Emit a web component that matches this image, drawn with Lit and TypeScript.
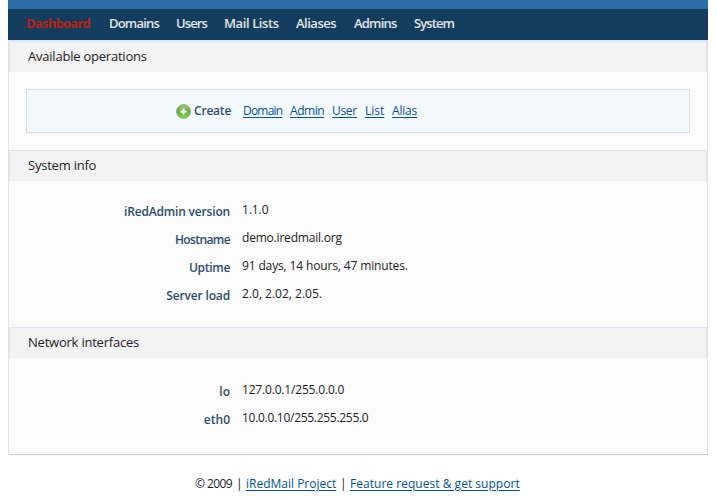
import { LitElement, html, css, svg } from "lit";
import { customElement } from "lit/decorators.js";

interface NavItem { label: string; width: number; spacing: number; active?: boolean }
interface Row { label: string; value: string; ls: number; vs: number }

const NAV: NavItem[] = [
  { label: "Dashboard", width: 83, spacing: -0.75, active: true },
  { label: "Domains", width: 67, spacing: -0.8 },
  { label: "Users", width: 48, spacing: -0.9 },
  { label: "Mail Lists", width: 72, spacing: -0.4 },
  { label: "Aliases", width: 58, spacing: -0.5 },
  { label: "Admins", width: 60, spacing: -0.8 },
  { label: "System", width: 60, spacing: -0.9 },
];

const CREATE = [
  { label: "Domain", width: 47, spacing: -0.8 },
  { label: "Admin", width: 42, spacing: -0.45 },
  { label: "User", width: 33, spacing: -0.3 },
  { label: "List", width: 27, spacing: 0 },
  { label: "Alias", width: 30, spacing: -0.2 },
];

const SYSTEM: Row[] = [
  { label: "iRedAdmin version", value: "1.1.0", ls: -0.18, vs: -0.1 },
  { label: "Hostname", value: "demo.iredmail.org", ls: -0.6, vs: -0.2 },
  { label: "Uptime", value: "91 days, 14 hours, 47 minutes.", ls: -0.3, vs: -0.14 },
  { label: "Server load", value: "2.0, 2.02, 2.05.", ls: -0.15, vs: 0 },
];

const NETWORK: Row[] = [
  { label: "lo", value: "127.0.0.1/255.0.0.0", ls: 0, vs: -0.18 },
  { label: "eth0", value: "10.0.0.10/255.255.255.0", ls: 0, vs: -0.29 },
];

const spaced = (n: number) => `letter-spacing:${n}px`;

@customElement("app-root")
export class AppRoot extends LitElement {
  static styles = css`
    :host { display: block; height: 499px; overflow: hidden; background: #fff;
      font: 12px/16px "Trebuchet MS", "Open Sans", "Noto Sans", sans-serif; color: #222; }
    * { box-sizing: border-box; }
    a { color: #00529b; text-decoration: underline; text-underline-offset: 2px; }
    .page { width: 700px; margin-left: 8px; }
    .top { height: 9px; background: #2a6fa8; }
    nav { display: flex; height: 31px; padding: 5px 0 0 18px; background: #123d5f; white-space: nowrap; }
    nav span { color: #e4e4e4; font-size: 13px; line-height: 18px; font-weight: 600; }
    nav .active { color: #b9200f; font-weight: 700; }
    .panel { height: 415px; background: #fbfbfb; border: 1px solid #dde4ed; border-top: 0; border-bottom-color: #c5ced9; }
    h2 { margin: 0; height: 31px; padding: 4px 0 0 18px; font-size: 13px; line-height: 20px; font-weight: 400;
      letter-spacing: -0.22px; background: #f3f3f3; border: 1px solid #dde4ed; border-bottom: 0; }
    h2.first { height: 32px; border-top-width: 2px; }
    .box { display: flex; height: 44px; margin: 17px 17px; padding: 13px 0 0 149px;
      background: #f4f9fe; border: 1px solid #d9e0e5; white-space: nowrap; }
    .plus { width: 15px; height: 15px; margin: 1px 3px 0 0; flex: none; }
    .create { width: 49px; font-weight: 600; letter-spacing: -0.2px; color: #2c4d70; }
    .rows { height: 146px; padding-top: 21px; }
    .rows.low { padding-top: 24px; }
    .row { display: flex; height: 28px; white-space: nowrap; }
    .row b { width: 221px; margin-right: 12px; padding-top: 2px; text-align: right; font-weight: 600; color: #2c4d70; }
    footer { display: flex; margin: 21px 0 0 187px; white-space: nowrap; }
    .c1 { width: 41px; letter-spacing: -0.6px; } .c2 { width: 10px; } .c3 { width: 94px; } .c4 { width: 10px; }
    .c5 { letter-spacing: 0.03px; }
  `;

  private rows(items: Row[], extra = "") {
    return html`<div class="rows ${extra}">${items.map((r) => html`
      <div class="row"><b><span style=${spaced(r.ls)}>${r.label}</span></b><span style=${spaced(r.vs)}>${r.value}</span></div>`)}
    </div>`;
  }

  private plus() {
    return html`<svg class="plus" viewBox="0 0 15 15">${svg`
      <defs><linearGradient id="g" x1="0" y1="0" x2="0" y2="1">
        <stop offset="0" stop-color="#9bc889"/><stop offset=".5" stop-color="#5fae3c"/><stop offset="1" stop-color="#8ad355"/>
      </linearGradient></defs>
      <circle cx="7.5" cy="7.5" r="7" fill="url(#g)" stroke="#81ab70" stroke-width=".8"/>
      <path d="M7.5 4.2v6.6M4.2 7.5h6.6" stroke="#fff" stroke-width="2"/>`}</svg>`;
  }

  render() {
    return html`<div class="page">
      <div class="top"></div>
      <nav>${NAV.map((n) => html`<span class=${n.active ? "active" : ""} style="width:${n.width}px;${spaced(n.spacing)}">${n.label}</span>`)}</nav>
      <div class="panel">
        <h2 class="first">Available operations</h2>
        <div class="box">${this.plus()}<span class="create">Create</span>
          ${CREATE.map((c) => html`<span style="width:${c.width}px;${spaced(c.spacing)}"><a>${c.label}</a></span>`)}
        </div>
        <h2>System info</h2>
        ${this.rows(SYSTEM)}
        <h2>Network interfaces</h2>
        ${this.rows(NETWORK, "low")}
      </div>
      <footer><span class="c1">© 2009</span><span class="c2">|</span><span class="c3"><a>iRedMail Project</a></span><span class="c4">|</span><span class="c5"><a>Feature request &amp; get support</a></span></footer>
    </div>`;
  }
}
